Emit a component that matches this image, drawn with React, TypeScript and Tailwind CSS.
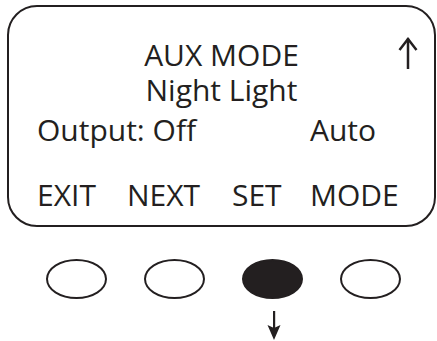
const ink = 'text-[#231f20]'

function UpArrow() {
  return (
    <svg width="20" height="32" viewBox="0 0 20 32" fill="none" stroke="#231f20" strokeWidth="2.5">
      <path d="M10 1.5 L10 32" />
      <path d="M1.5 13 L10 2 L18.5 13" strokeLinejoin="miter" />
    </svg>
  )
}

function DownArrow() {
  return (
    <svg width="14" height="29" viewBox="0 0 14 29" fill="#231f20">
      <rect x="6" y="0" width="2.2" height="18" />
      <path d="M0.5 14 L7 29 L13.5 14 L7 17 Z" />
    </svg>
  )
}

function Key({ pressed }: { pressed?: boolean }) {
  return (
    <div
      className={`w-[61px] h-[40px] rounded-[50%] border-[2.5px] border-[#231f20] ${pressed ? 'bg-[#231f20]' : 'bg-white'}`}
    />
  )
}

export default function App() {
  return (
    <div className={`w-[437px] h-[341px] bg-white overflow-hidden ${ink} font-['Open_Sans',sans-serif]`}>
      <div className="ml-[7px] mt-[5px] w-[429px] h-[222px] rounded-[30px] border-[2.5px] border-[#231f20] pt-[31px] text-[30px] leading-[34px]">
        <div className="grid grid-cols-[1fr_auto_1fr]">
          <div />
          <div>AUX MODE</div>
          <div className="flex justify-end pr-[16px] -mt-[1px]">
            <UpArrow />
          </div>
        </div>
        <div className="text-center mt-[1px]">Night Light</div>
        <div className="grid grid-cols-[90px_105px_78px_1fr] pl-[28px] mt-[6px]">
          <div className="col-span-3">Output: Off</div>
          <div>Auto</div>
        </div>
        <div className="grid grid-cols-[90px_105px_78px_1fr] pl-[28px] mt-[31px]">
          <div>EXIT</div>
          <div>NEXT</div>
          <div>SET</div>
          <div>MODE</div>
        </div>
      </div>
      <div className="flex gap-[37px] ml-[46px] mt-[32px]">
        <Key />
        <Key />
        <Key pressed />
        <Key />
      </div>
      <div className="ml-[267px] mt-[12px]">
        <DownArrow />
      </div>
    </div>
  )
}
